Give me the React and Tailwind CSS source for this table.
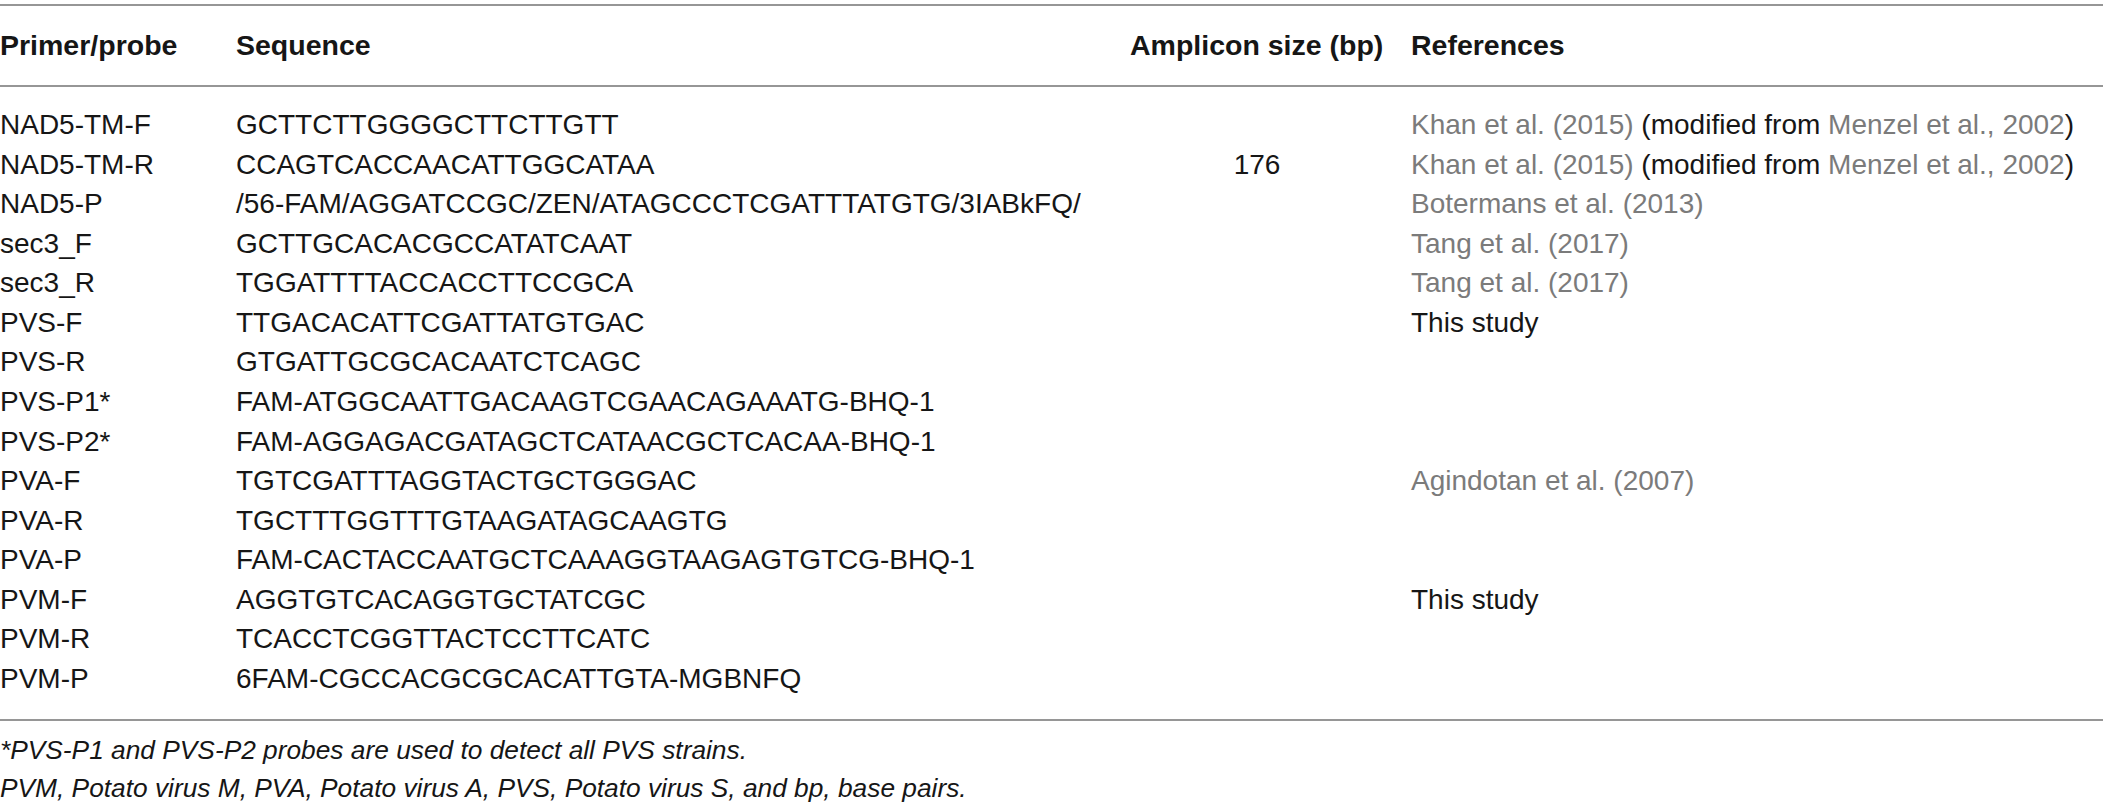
import React from "react";

const G = ({ children }) => <span className="text-[#7b7b7b]">{children}</span>;

const khan = (
  <>
    <G>Khan et al. (2015)</G> (modified from <G>Menzel et al., 2002</G>)
  </>
);

const rows = [
  ["NAD5-TM-F", "GCTTCTTGGGGCTTCTTGTT", "", khan],
  ["NAD5-TM-R", "CCAGTCACCAACATTGGCATAA", "176", khan],
  ["NAD5-P", "/56-FAM/AGGATCCGC/ZEN/ATAGCCCTCGATTTATGTG/3IABkFQ/", "", <G>Botermans et al. (2013)</G>],
  ["sec3_F", "GCTTGCACACGCCATATCAAT", "", <G>Tang et al. (2017)</G>],
  ["sec3_R", "TGGATTTTACCACCTTCCGCA", "", <G>Tang et al. (2017)</G>],
  ["PVS-F", "TTGACACATTCGATTATGTGAC", "", "This study"],
  ["PVS-R", "GTGATTGCGCACAATCTCAGC", "", ""],
  ["PVS-P1*", "FAM-ATGGCAATTGACAAGTCGAACAGAAATG-BHQ-1", "", ""],
  ["PVS-P2*", "FAM-AGGAGACGATAGCTCATAACGCTCACAA-BHQ-1", "", ""],
  ["PVA-F", "TGTCGATTTAGGTACTGCTGGGAC", "", <G>Agindotan et al. (2007)</G>],
  ["PVA-R", "TGCTTTGGTTTGTAAGATAGCAAGTG", "", ""],
  ["PVA-P", "FAM-CACTACCAATGCTCAAAGGTAAGAGTGTCG-BHQ-1", "", ""],
  ["PVM-F", "AGGTGTCACAGGTGCTATCGC", "", "This study"],
  ["PVM-R", "TCACCTCGGTTACTCCTTCATC", "", ""],
  ["PVM-P", "6FAM-CGCCACGCGCACATTGTA-MGBNFQ", "", ""],
];

export default function App() {
  return (
    <div
      className="w-[2103px] h-[808px] bg-white text-[#161616] overflow-hidden pt-[4px]"
      style={{ fontFamily: '"Liberation Sans", Arial, sans-serif' }}
    >
      <div className="h-[2px] bg-[#969696]" />
      <div className="grid grid-cols-[236px_894px_254px_1fr] h-[79px] items-center font-bold text-[28.5px] leading-none">
        <div>Primer/probe</div>
        <div>Sequence</div>
        <div className="whitespace-nowrap">Amplicon size (bp)</div>
        <div className="pl-[27px]">References</div>
      </div>
      <div className="h-[2px] bg-[#969696]" />
      <div className="pt-[18px] pb-[20.6px] text-[28px] leading-[39.56px]">
        {rows.map((r, i) => (
          <div key={i} className="grid grid-cols-[236px_894px_254px_1fr] whitespace-nowrap">
            <div>{r[0]}</div>
            <div>{r[1]}</div>
            <div className="text-center">{r[2]}</div>
            <div className="pl-[27px]">{r[3]}</div>
          </div>
        ))}
      </div>
      <div className="h-[2px] bg-[#969696]" />
      <div className="pt-[10px] italic text-[26.3px] leading-[38px]">
        <div>*PVS-P1 and PVS-P2 probes are used to detect all PVS strains.</div>
        <div>PVM, Potato virus M, PVA, Potato virus A, PVS, Potato virus S, and bp, base pairs.</div>
      </div>
    </div>
  );
}
